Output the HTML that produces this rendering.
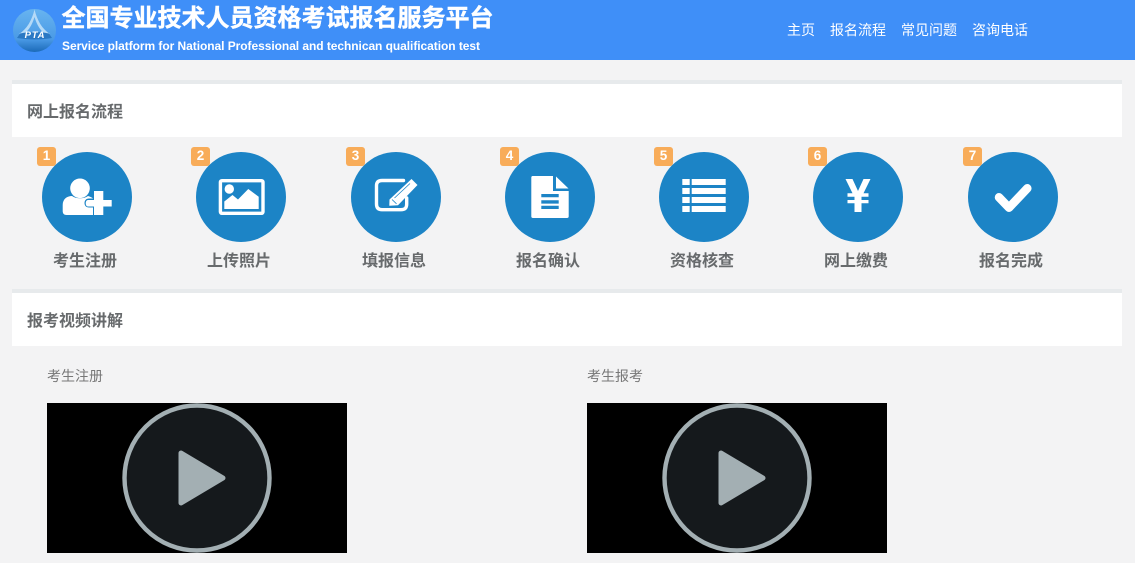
<!DOCTYPE html>
<html lang="zh-CN"><head><meta charset="utf-8"><title>全国专业技术人员资格考试报名服务平台</title>
<style>
*{box-sizing:border-box}
html,body{margin:0;padding:0;width:1135px;height:563px;overflow:hidden;background:#f3f3f4;font-family:"Liberation Sans","Noto Sans CJK SC",sans-serif;color:#676a6c}
.a{position:absolute;white-space:nowrap}
.hd{left:0;top:0;width:1135px;height:60px;background:#3f8ff8}
.t{left:61.500px;top:1px;font-size:24px;line-height:36px;font-weight:700;color:#fff;-webkit-text-stroke:.4px #fff}
.s{left:62px;top:38.500px;font-size:12px;line-height:15px;font-weight:700;color:#fff;letter-spacing:-.055px}
.n{top:21px;font-size:14px;line-height:18px;color:#fff}
.p{left:12px;width:1110px;height:57px;background:#fff;border-top:4px solid #e7eaec;padding:0 15px;font-size:16px;font-weight:700;line-height:58px}
.c{top:152px;width:90px;height:90px;border-radius:50%;background:#1c84c6}
.b{top:147px;width:19px;height:19px;border-radius:3px;background:#f8ac59;color:#fff;font-size:13.500px;font-weight:700;line-height:18px;text-align:center}
.l{top:251px;width:120px;text-align:center;font-size:16px;font-weight:700;line-height:22px}
.v{top:403px;width:300px;height:150px;background:#000}
.m{top:367px;font-size:14px;line-height:18px;color:#777}
svg{position:absolute;left:0;top:0}
</style></head><body>
<div class="a hd"></div>
<svg width="70" height="60" viewBox="0 0 70 60"><defs><linearGradient id="g" x1="0" y1="0" x2="0" y2="1"><stop offset="0" stop-color="#68b4f0"/><stop offset=".7" stop-color="#4a9ae6"/><stop offset="1" stop-color="#1b6ab8"/></linearGradient></defs>
<circle cx="34.500" cy="30.500" r="21.500" fill="url(#g)"/>
<path d="M34.500 9.500C32 20 27 29 19 34L24 34C29 30 32 25 34.500 17C37 25 40 30 45 34L50 34C42 29 37 20 34.500 9.500Z" fill="#b5daf7"/>
<path d="M20 33.500C29 31.500 40 31.500 49 33.500L52 38C41 40 28 40 17 38Z" fill="#2a78c4"/></svg>
<div class="a" style="left:20px;top:30px;width:30px;text-align:center;font:italic 700 9.500px/11px 'Liberation Sans',sans-serif;letter-spacing:.8px;color:#fff">PTA</div>
<div class="a t">全国专业技术人员资格考试报名服务平台</div>
<div class="a s">Service platform for National Professional and technican qualification test</div>
<div class="a n" style="left:787px">主页</div><div class="a n" style="left:830px">报名流程</div><div class="a n" style="left:901px">常见问题</div><div class="a n" style="left:972px">咨询电话</div>

<div class="a p" style="top:80px">网上报名流程</div>

<div class="a c" style="left:42px"></div><div class="a c" style="left:196px"></div><div class="a c" style="left:351px"></div><div class="a c" style="left:505px"></div><div class="a c" style="left:659px"></div><div class="a c" style="left:813px"></div><div class="a c" style="left:968px"></div>
<div class="a b" style="left:37px">1</div><div class="a b" style="left:191px">2</div><div class="a b" style="left:346px">3</div><div class="a b" style="left:500px">4</div><div class="a b" style="left:654px">5</div><div class="a b" style="left:808px">6</div><div class="a b" style="left:963px">7</div>
<div class="a l" style="left:25px">考生注册</div><div class="a l" style="left:179px">上传照片</div><div class="a l" style="left:334px">填报信息</div><div class="a l" style="left:488px">报名确认</div><div class="a l" style="left:642px">资格核查</div><div class="a l" style="left:796px">网上缴费</div><div class="a l" style="left:951px">报名完成</div>

<svg width="1135" height="300" viewBox="0 0 1135 300">
<!-- 1 user plus -->
<circle cx="80" cy="188.300" r="9.800" fill="#fff"/>
<path d="M62.700 211V205C62.700 199 67 196 72 196C76 199 84 199 88 196C90 196.500 92 197.500 93 198.500H89C86 198.500 84.500 200.500 84.500 203C84.500 205.500 86 207.500 89 207.500H93V215H66.500C64 215 62.700 213.500 62.700 211Z" fill="#fff"/>
<path d="M94 191H103.300V200H111.700V206.500H103.300V215H94V206.500H88C85 206.500 85 200 88 200H94Z" fill="#fff"/>
<!-- 2 picture -->
<rect x="220.400" y="180.700" width="42.600" height="32.600" rx="1.500" fill="none" stroke="#fff" stroke-width="3.400"/>
<circle cx="229.300" cy="189" r="4.700" fill="#fff"/>
<path d="M224.300 209V201.500L232.500 195L238 199.500L248.300 189L258.700 196.700V209Z" fill="#fff"/>
<!-- 3 edit -->
<path d="M403.500 180.500H382C378 180.500 376.500 182.500 376.500 186V204C376.500 208 378.500 209.700 382 209.700H401C405 209.700 406.700 208 406.700 204V198" fill="none" stroke="#fff" stroke-width="3.400" stroke-linecap="round"/>
<path d="M389.500 199.500L411.500 179L417.500 185L398 205.200L389.300 205.800Z" fill="#fff"/>
<path d="M392 199.500L396.500 203.800M394.500 198L410 183.500" stroke="#1c84c6" stroke-width=".8" fill="none"/>
<!-- 4 doc -->
<path d="M532.500 176H553V191H568.700V216.500C568.700 217.500 568 218 567 218H533C532 218 531.300 217.500 531.300 216.500V177.500C531.300 176.500 532 176 532.500 176Z" fill="#fff"/>
<path d="M556 176.500L568.500 188.500H556Z" fill="#fff"/>
<path d="M541.300 194h17.400v3.300h-17.400zM541.300 200.300h17.400v3.300h-17.400zM541.300 205.700h17.400v3.300h-17.400z" fill="#1c84c6"/>
<!-- 5 list -->
<path d="M682.300 179h7.400v6h-7.400zM691.700 179h34v6h-34zM682.300 188h7.400v6h-7.400zM691.700 188h34v6h-34zM682.300 197h7.400v6h-7.400zM691.700 197h34v6h-34zM682.300 206h7.400v6h-7.400zM691.700 206h34v6h-34z" fill="#fff"/>
<!-- 6 yen -->
<path d="M845.500 179H852.500L858 191L863.500 179H870.500L863.500 193.300H868.500V196.700H861.500V200H868.500V203.300H861.500V212H854.500V203.300H847.500V200H854.500V196.700H847.500V193.300H852.500Z" fill="#fff"/>
<!-- 7 check -->
<path d="M999 197.300L1009 207.700L1027.300 188.300" fill="none" stroke="#fff" stroke-width="8.500" stroke-linecap="round" stroke-linejoin="round"/>
</svg>

<div class="a p" style="top:289px">报考视频讲解</div>
<div class="a m" style="left:47px">考生注册</div>
<div class="a m" style="left:587px">考生报考</div>
<div class="a v" style="left:47px"><svg width="300" height="150" viewBox="0 0 300 150"><circle cx="150" cy="75" r="72.500" fill="#15191c" stroke="#a3afb3" stroke-width="4.400"/><path d="M134 50V100L176 75Z" fill="#a3afb3" stroke="#a3afb3" stroke-width="5" stroke-linejoin="round"/></svg></div>
<div class="a v" style="left:587px"><svg width="300" height="150" viewBox="0 0 300 150"><circle cx="150" cy="75" r="72.500" fill="#15191c" stroke="#a3afb3" stroke-width="4.400"/><path d="M134 50V100L176 75Z" fill="#a3afb3" stroke="#a3afb3" stroke-width="5" stroke-linejoin="round"/></svg></div>
</body></html>
